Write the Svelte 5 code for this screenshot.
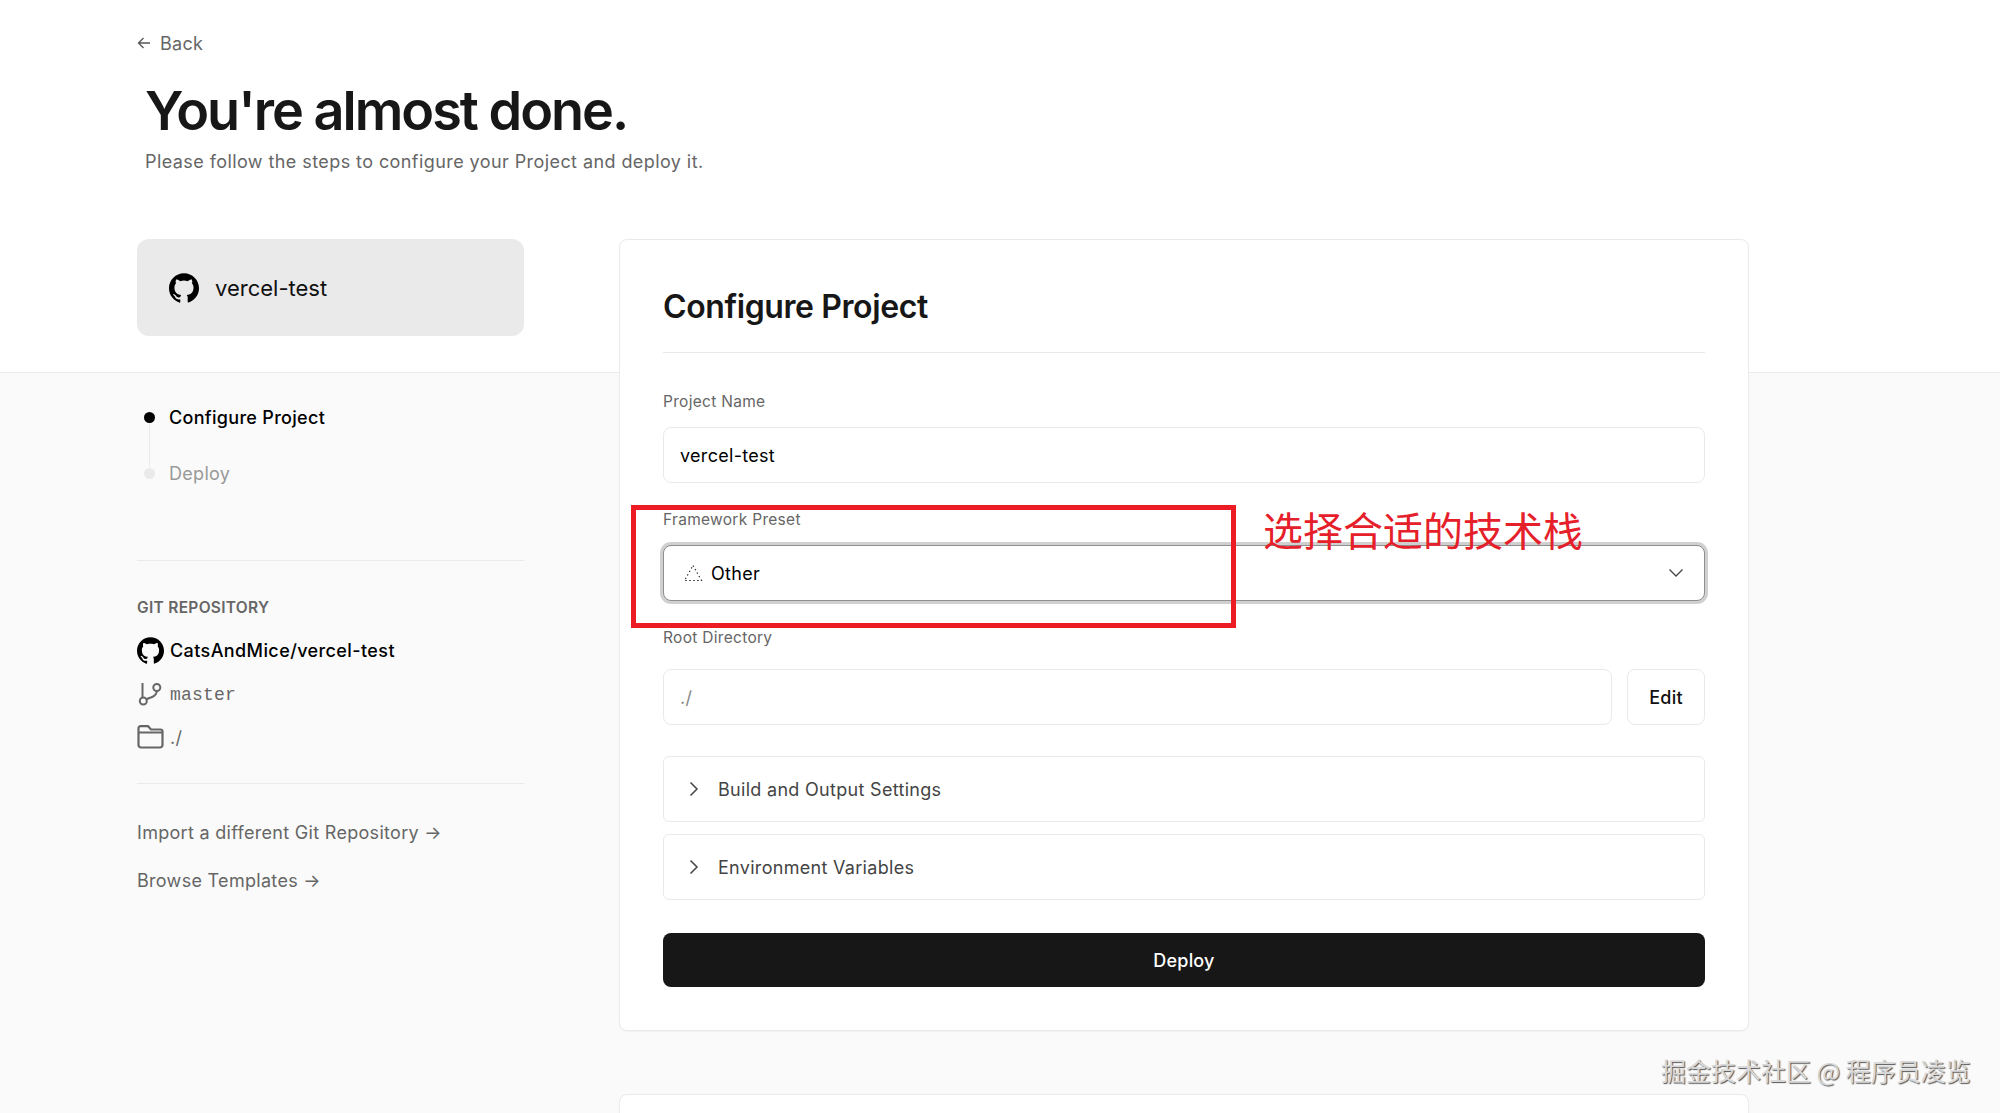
<script>
  const gh = "M12 .297c-6.63 0-12 5.373-12 12 0 5.303 3.438 9.8 8.205 11.385.6.113.82-.258.82-.577 0-.285-.01-1.04-.015-2.04-3.338.724-4.042-1.61-4.042-1.61C4.422 18.07 3.633 17.7 3.633 17.7c-1.087-.744.084-.729.084-.729 1.205.084 1.838 1.236 1.838 1.236 1.07 1.835 2.809 1.305 3.495.998.108-.776.417-1.305.76-1.605-2.665-.3-5.466-1.332-5.466-5.93 0-1.31.465-2.38 1.235-3.22-.135-.303-.54-1.523.105-3.176 0 0 1.005-.322 3.3 1.23.96-.267 1.98-.399 3-.405 1.02.006 2.04.138 3 .405 2.28-1.552 3.285-1.23 3.285-1.23.645 1.653.24 2.873.12 3.176.765.84 1.23 1.91 1.23 3.22 0 4.61-2.805 5.625-5.475 5.92.42.36.81 1.096.81 2.22 0 1.606-.015 2.896-.015 3.286 0 .315.21.69.825.57C20.565 22.092 24 17.592 24 12.297c0-6.627-5.373-12-12-12";
</script>

<div class="page">
  <a class="back" href="#back">
    <svg width="14" height="14" viewBox="0 0 14 14" fill="none" stroke="#555" stroke-width="1.3"><path d="M13 7H1.5M6.5 2 1.5 7l5 5" /></svg>
    Back
  </a>
  <h1>You're almost done.</h1>
  <p class="sub">Please follow the steps to configure your Project and deploy it.</p>

  <div class="cols">
    <aside>
      <div class="repo-card">
        <svg width="30" height="30" viewBox="0 0 24 24" fill="#000"><path d={gh} /></svg>
        <span>vercel-test</span>
      </div>
      <ol class="steps">
        <li class="on"><i></i>Configure Project</li>
        <li class="off"><i></i>Deploy</li>
      </ol>
      <hr class="d1" />
      <div class="git-title">GIT REPOSITORY</div>
      <div class="git-row strong">
        <svg width="27" height="27" viewBox="0 0 24 24" fill="#000"><path d={gh} /></svg>
        CatsAndMice/vercel-test
      </div>
      <div class="git-row mono">
        <svg width="27" height="27" viewBox="0 0 27 27" fill="none" stroke="#666" stroke-width="2"><circle cx="6.300" cy="20" r="3.500" /><circle cx="19.800" cy="6.500" r="3.500" /><path d="M5.500 2v14.500M19.800 10c0 4-3 5.500-6 6.500-2 .6-3.500 1.200-4.500 2" /></svg>
        master
      </div>
      <div class="git-row slash">
        <svg width="27" height="27" viewBox="0 0 27 27" fill="none" stroke="#666" stroke-width="2.200"><path d="M1.500 8.500V4.200A2 2 0 0 1 3.500 2.200h7.500l3 3.300h9.500a2 2 0 0 1 2 2V21a2.500 2.500 0 0 1-2.500 2.500H4A2.500 2.500 0 0 1 1.500 21V8.500h24" /></svg>
        ./
      </div>
      <hr class="d2" />
      <a class="link first" href="#import">Import a different Git Repository →</a>
      <a class="link second" href="#templates">Browse Templates →</a>
    </aside>

    <main>
      <section class="card">
        <h2>Configure Project</h2>
        <label class="l1" for="pn">Project Name</label>
        <div class="field" id="pn">vercel-test</div>
        <label class="l2" for="fw">Framework Preset</label>
        <div class="field select" id="fw">
          <svg width="20" height="18" viewBox="0 0 20 18" fill="none" stroke="#222" stroke-width="1.100" stroke-dasharray="1.500 2.500"><path d="M10 1.500 18.500 16.500H1.500Z" /></svg>
          <span>Other</span>
          <svg class="chev" width="16" height="10" viewBox="0 0 16 10" fill="none" stroke="#444" stroke-width="1.300"><path d="M1.500 1.500 8 8l6.500-6.500" /></svg>
        </div>
        <label class="l3" for="rd">Root Directory</label>
        <div class="root-row">
          <div class="field muted" id="rd">./</div>
          <button class="edit">Edit</button>
        </div>
        <div class="acc a1">
          <svg width="10" height="16" viewBox="0 0 10 16" fill="none" stroke="#444" stroke-width="1.500"><path d="M1.500 1.500 8 8l-6.500 6.500" /></svg>
          Build and Output Settings
        </div>
        <div class="acc a2">
          <svg width="10" height="16" viewBox="0 0 10 16" fill="none" stroke="#444" stroke-width="1.500"><path d="M1.500 1.500 8 8l-6.500 6.500" /></svg>
          Environment Variables
        </div>
        <button class="deploy">Deploy</button>
      </section>
      <section class="card next"></section>
    </main>
  </div>

  <div class="red-box"></div>
  <div class="red-note">选择合适的技术栈</div>
  <div class="mark">掘金技术社区 @ 程序员凌览</div>
</div>

<style>
  :global(body) {
    margin: 0;
    background: #fafafa;
  }
  .page {
    position: relative;
    height: 1113px;
    overflow: hidden;
    padding-left: 137px;
    box-sizing: border-box;
    font-family: Inter, "Noto Sans CJK SC", sans-serif;
    letter-spacing: 0.300px;
    color: #171717;
    background: linear-gradient(#fff 0 372px, #eaeaea 372px 373px, #fafafa 373px);
  }
  .back {
    display: flex;
    align-items: center;
    gap: 9px;
    height: 22px;
    padding-top: 32px;
    font-size: 18px;
    color: #666;
    text-decoration: none;
  }
  h1 {
    margin: 24px 0 0 8px;
    font-size: 54px;
    line-height: 65px;
    font-weight: 600;
    letter-spacing: -2px;
    color: #171717;
  }
  .sub {
    margin: 7px 0 0 8px;
    font-size: 18px;
    line-height: 24px;
    letter-spacing: 0.420px;
    color: #666;
  }
  .cols {
    display: flex;
    gap: 95px;
    margin-top: 65px;
  }
  aside {
    width: 387px;
    flex: none;
  }
  .repo-card {
    display: flex;
    align-items: center;
    gap: 16px;
    height: 97px;
    padding-left: 32px;
    box-sizing: border-box;
    border-radius: 12px;
    background: #eaeaea;
    font-size: 22px;
    letter-spacing: 0;
    color: #111;
  }
  .steps {
    list-style: none;
    margin: 69px 0 0;
    padding: 0;
    font-size: 18px;
  }
  .steps li {
    display: flex;
    align-items: center;
    position: relative;
    height: 24px;
    padding-left: 32px;
  }
  .steps li + li {
    margin-top: 32px;
  }
  .steps i {
    position: absolute;
    left: 7px;
    top: 6.500px;
    width: 11px;
    height: 11px;
    border-radius: 50%;
  }
  .on {
    color: #000;
    font-weight: 500;
  }
  .on i {
    background: #000;
  }
  .on::after {
    content: "";
    position: absolute;
    left: 12px;
    top: 18px;
    width: 1px;
    height: 44px;
    background: #eaeaea;
  }
  .off {
    color: #999;
  }
  .off i {
    background: #eaeaea;
  }
  hr {
    height: 1px;
    margin: 0;
    border: 0;
    background: #eaeaea;
  }
  .d1 {
    margin-top: 74.500px;
  }
  .git-title {
    margin-top: 37.500px;
    font-size: 15.500px;
    line-height: 20px;
    font-weight: 600;
    color: #666;
  }
  .git-row {
    display: flex;
    align-items: center;
    gap: 6px;
    height: 27px;
    font-size: 18px;
    margin-top: 17px;
  }
  .git-row.strong {
    margin-top: 19px;
    color: #000;
    font-weight: 500;
    letter-spacing: 0.400px;
  }
  .mono {
    font-family: "Liberation Mono", monospace;
    letter-spacing: 0.200px;
    color: #666;
  }
  .slash {
    margin-top: 16px;
    color: #666;
  }
  .d2 {
    margin-top: 31.500px;
  }
  .link {
    display: block;
    font-size: 18px;
    line-height: 24px;
    color: #666;
    text-decoration: none;
  }
  .link.first {
    margin-top: 37px;
  }
  .link.second {
    margin-top: 24px;
  }
  main {
    width: 1130px;
    flex: none;
  }
  .card {
    box-sizing: border-box;
    padding: 47px 43px 43px;
    border: 1px solid #eaeaea;
    border-radius: 8px;
    background: #fff;
    box-shadow: 0 1px 1px rgba(0, 0, 0, 0.03);
  }
  .next {
    height: 60px;
    margin-top: 63px;
  }
  h2 {
    margin: 0;
    padding-bottom: 25px;
    border-bottom: 1px solid #eaeaea;
    font-size: 32px;
    line-height: 40px;
    font-weight: 600;
    letter-spacing: -0.400px;
  }
  label {
    display: block;
    font-size: 15.500px;
    line-height: 20px;
    color: #666;
  }
  .l1 {
    margin-top: 39px;
    margin-bottom: 15px;
  }
  .l2 {
    margin-top: 27px;
    margin-bottom: 15px;
  }
  .l3 {
    margin-top: 26.500px;
    margin-bottom: 21.500px;
  }
  .field {
    display: flex;
    align-items: center;
    box-sizing: border-box;
    height: 56px;
    padding: 0 16px;
    border: 1px solid #eaeaea;
    border-radius: 8px;
    background: #fff;
    font-size: 18px;
    color: #000;
  }
  .select {
    position: relative;
    border-color: #8f8f8f;
    box-shadow: 0 0 0 3px #d0d0d0;
    padding-left: 19px;
    gap: 8px;
  }
  .chev {
    margin-left: auto;
    margin-right: 4px;
  }
  .root-row {
    display: flex;
    gap: 15px;
  }
  .muted {
    flex: 1;
    color: #888;
  }
  .edit {
    width: 78px;
    height: 56px;
    border: 1px solid #eaeaea;
    border-radius: 8px;
    background: #fff;
    font: 500 18px Inter, sans-serif;
    letter-spacing: 0.200px;
    color: #111;
  }
  .acc {
    display: flex;
    align-items: center;
    gap: 19px;
    box-sizing: border-box;
    height: 66px;
    padding-left: 25px;
    border: 1px solid #eaeaea;
    border-radius: 6px;
    font-size: 18px;
    color: #444;
  }
  .a1 {
    margin-top: 31px;
  }
  .a2 {
    margin-top: 12px;
  }
  .deploy {
    display: block;
    width: 100%;
    height: 54px;
    margin-top: 33px;
    border: 0;
    border-radius: 8px;
    background: #171717;
    color: #fff;
    font: 500 18px Inter, sans-serif;
    letter-spacing: 0.200px;
  }
  .red-box {
    position: absolute;
    left: 631px;
    top: 505px;
    width: 605px;
    height: 123px;
    box-sizing: border-box;
    border: 5px solid #ed1c24;
  }
  .red-note {
    position: absolute;
    left: 1263px;
    top: 504px;
    font-family: "Noto Sans CJK SC", sans-serif;
    font-size: 40px;
    line-height: 50px;
    font-weight: 400;
    letter-spacing: 0;
    color: #e5202a;
    white-space: nowrap;
  }
  .mark {
    position: absolute;
    left: 1661px;
    top: 1052px;
    font-family: "Noto Sans CJK SC", sans-serif;
    font-size: 25px;
    line-height: 36px;
    letter-spacing: 0;
    color: #d8d8d8;
    text-shadow: 1px 1px 1px #555;
    white-space: nowrap;
  }
</style>
